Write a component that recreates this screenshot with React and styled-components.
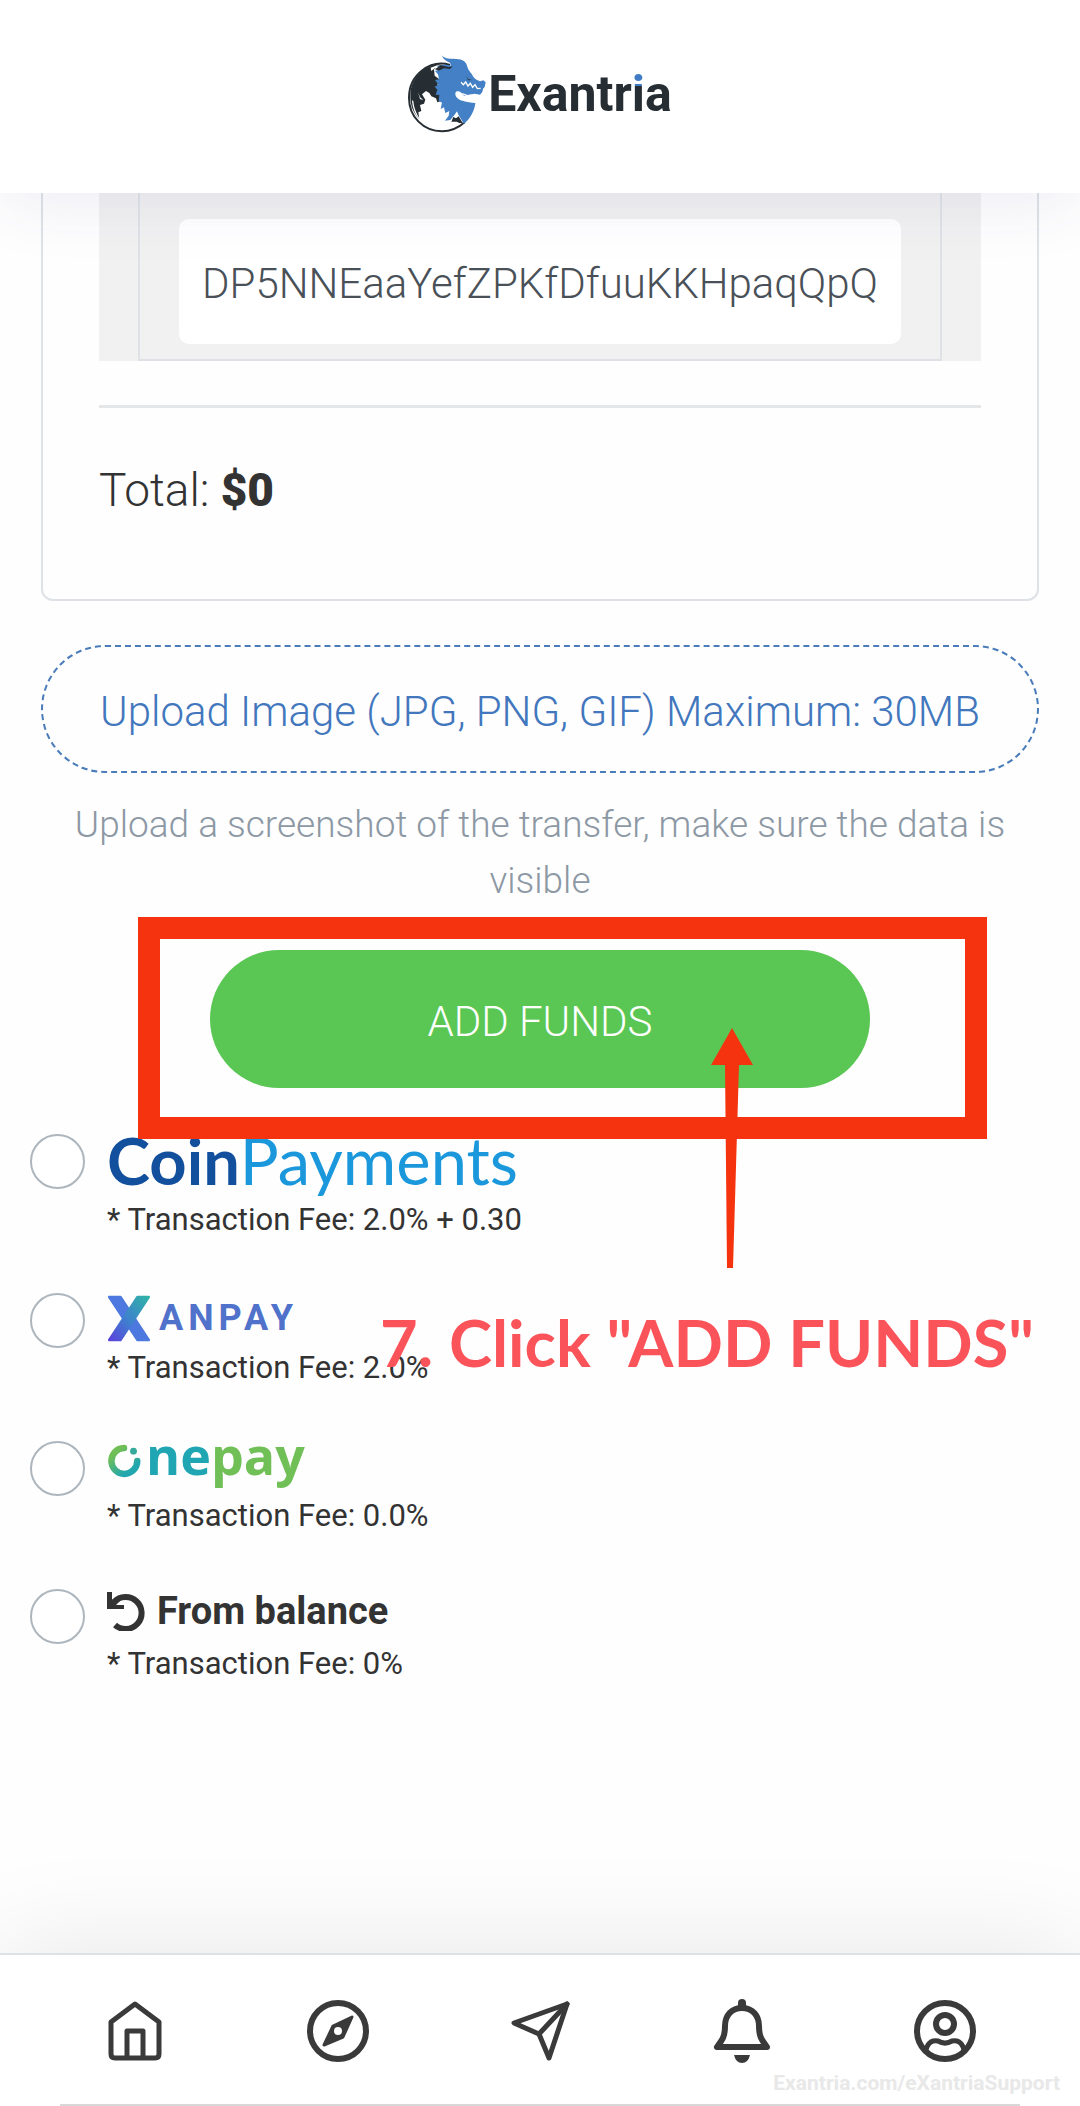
import React from "react";
import styled, { createGlobalStyle } from "styled-components";

const ink = "#333333";
const line = "#dee2e6";
const red = "#f5330f";

const GlobalStyle = createGlobalStyle`
  *, *::before, *::after { box-sizing: border-box; }
  body {
    margin: 0;
    background: #fefefe;
    color: ${ink};
    font-family: Roboto, "Liberation Sans", sans-serif;
  }
`;

const Page = styled.div`
  display: flex;
  flex-direction: column;
  min-height: 100vh;
  overflow-x: hidden;
`;

const Header = styled.header`
  position: relative;
  z-index: 2;
  display: flex;
  align-items: center;
  justify-content: center;
  height: 193px;
  padding-bottom: 6px;
  background: #fff;
  box-shadow: 0 4px 70px rgba(60, 60, 150, 0.1);
`;

const Logo = styled.a`
  display: flex;
  align-items: center;
  gap: 2px;
  color: #272e33;
  text-decoration: none;
  font-size: 50px;
  font-weight: 700;
  line-height: 60px;
`;

const TwoToneLetter = styled.span`
  background: linear-gradient(#3f7cc4 36%, #272e33 36%);
  background-clip: text;
  color: transparent;
`;

const Main = styled.main`
  display: flex;
  flex-direction: column;
`;

const Form = styled.form`
  display: flex;
  flex-direction: column;
  padding: 0 41px;
`;

const Card = styled.section`
  padding: 0 56px 79px;
  border: 2px solid ${line};
  border-top: 0;
  border-radius: 0 0 12px 12px;
`;

const Shade = styled.div`
  padding: 0 39px;
  background: #f1f1f1;
`;

const AddressCell = styled.div`
  padding: 26px 39px 15px;
  border: 2px solid ${line};
  border-top: 0;
`;

const AddressInput = styled.input`
  display: block;
  width: 100%;
  height: 125px;
  padding: 4px 20px 0;
  border: 0;
  border-radius: 10px;
  background: #fff;
  color: #495057;
  font: 300 42px Roboto, "Liberation Sans", sans-serif;
  text-align: center;
`;

const Rule = styled.hr`
  height: 3px;
  margin: 44px 0 52px;
  border: 0;
  background: #e5e6e7;
`;

const Total = styled.p`
  margin: 0;
  font-size: 46px;
  font-weight: 300;
  line-height: 60px;

  strong { font-weight: 900; }
`;

const Upload = styled.label`
  display: flex;
  align-items: center;
  justify-content: center;
  height: 128px;
  margin-top: 44px;
  padding-top: 4px;
  border: 2px dashed #4a7cba;
  border-radius: 64px;
  color: #4277bd;
  font-size: 42px;
  font-weight: 300;
  cursor: pointer;
`;

const HiddenFile = styled.input`
  position: absolute;
  width: 1px;
  height: 1px;
  opacity: 0;
`;

const Hint = styled.p`
  margin: 24px 0 41px;
  color: #8c98a4;
  font-size: 37px;
  font-weight: 300;
  line-height: 56px;
  text-align: center;
`;

const SubmitArea = styled.div`
  position: relative;
  z-index: 1;
  align-self: center;
  width: 660px;
`;

const SubmitButton = styled.button`
  display: block;
  width: 100%;
  height: 138px;
  padding: 4px 0 0;
  border: 0;
  border-radius: 69px;
  background: #5ac754;
  color: #fff;
  font: 300 42px Roboto, "Liberation Sans", sans-serif;
  cursor: pointer;
`;

const Highlight = styled.div`
  position: absolute;
  inset: -33px -117px -51px -72px;
  border: 22px solid ${red};
  pointer-events: none;
`;

const Arrow = styled.svg`
  position: absolute;
  top: 78px;
  left: 501px;
  width: 42px;
  height: 240px;
  pointer-events: none;
`;

const StepLabel = styled.div`
  position: absolute;
  top: 352px;
  left: 170px;
  color: #fa545a;
  font-family: Lato, "Liberation Sans", sans-serif;
  font-size: 65px;
  font-weight: 700;
  line-height: 80px;
  white-space: nowrap;
  pointer-events: none;
`;

const Methods = styled.ul`
  display: flex;
  flex-direction: column;
  gap: 52px;
  margin: 46px 0 0;
  padding: 0 30px;
  list-style: none;
`;

const Method = styled.label`
  display: flex;
  align-items: flex-start;
  gap: 22px;
  cursor: pointer;
`;

const Radio = styled.input`
  appearance: none;
  flex: none;
  width: 55px;
  height: 55px;
  margin: 0;
  border: 2px solid #adb5bd;
  border-radius: 50%;
  background: #fff;

  &:checked { border: 16px solid #4277bd; }
`;

const MethodName = styled.div`
  display: flex;
  align-items: flex-start;
  height: ${(p) => (p.$tall ? 63 : 52)}px;
`;

const Fee = styled.div`
  font-size: 31px;
  line-height: 46px;
  height: 44px;
`;

const CoinMark = styled.span`
  color: #1b98dc;
  font-family: Lato, "Liberation Sans", sans-serif;
  font-size: 65px;
  line-height: 52px;

  b { color: #124f9c; }
`;

const XanMark = styled.span`
  display: flex;
  align-items: center;
  gap: 8px;
  height: 50px;
  color: #5072ca;
  font-size: 36px;
  font-weight: 700;
  letter-spacing: 5px;
`;

const OneMark = styled.span`
  display: flex;
  align-items: flex-start;
  gap: 5px;
  color: #70bf57;
  font-family: "Open Sans", "Noto Sans", sans-serif;
  font-size: 52px;
  font-weight: 700;
  line-height: 28px;

  em { color: #20a5b3; font-style: normal; }
  svg { margin-top: 3px; }
`;

const BalanceMark = styled.span`
  display: flex;
  align-items: center;
  gap: 11px;
  font-size: 38px;
  font-weight: 700;
  line-height: 44px;
`;

const BottomNav = styled.nav`
  position: relative;
  display: flex;
  align-items: center;
  justify-content: space-around;
  height: 153px;
  margin-top: auto;
  padding: 0 34px;
  border-top: 2px solid ${line};
  background: #fff;
  box-shadow: 0 0 110px rgba(0, 0, 0, 0.1);

  &::after {
    content: "";
    position: absolute;
    right: 60px;
    bottom: 0;
    left: 60px;
    height: 2px;
    background: #d8d8d8;
  }
`;

const NavLink = styled.a`
  display: flex;
  color: #3a3a3a;
`;

const Watermark = styled.span`
  position: absolute;
  right: 20px;
  bottom: 11px;
  color: #e8e8e8;
  font-size: 21px;
  font-weight: 700;
  line-height: 24px;
`;

function DragonIcon() {
  return (
    <svg width="78" height="78" viewBox="24 12 234 234" aria-hidden="true">
      <path d="M150 42C90 24 27 72 27 140C27 198 70 240 126 241C155 241 176 230 194 214" fill="none" stroke="#272e33" strokeWidth="6" />
      <path d="M112 40C68 48 34 82 31 128C30 160 38 184 58 204L55 184L64 180L60 162L72 158L76 146L66 130L78 120L88 126L94 136L108 142L112 154L124 150L126 120L112 102L120 86L104 74L102 54L140 44Z" fill="#272e33" />
      <path d="M36 148C38 176 48 198 66 212C50 192 42 172 40 150Z" fill="#fff" />
      <path d="M92 50L112 43L140 47L120 52L112 56L104 52L94 60Z" fill="#fff" />
      <path d="M54 124L60 138L70 148L60 144Z" fill="#fff" />
      <path d="M154 212L160 198L168 202L176 196L188 216L178 216L170 212Z" fill="#272e33" />
      <path d="M125 13C137 26 151 23 166 24C187 23 199 32 202 47C204 56 211 63 216 70C221 83 231 88 240 91L250 88L257 94L254 108L249 113L247 123L240 131L224 128L192 134L184 125C170 115 163 124 167 134C173 150 202 153 226 156C224 178 211 203 192 219L176 193L171 181L165 190L151 207L135 209L146 194L148 180L136 186L132 169L122 174L126 155L116 149L118 132L107 131L112 116L104 107L115 101L105 87L117 85L114 70L105 60L117 57L112 46C123 42 139 39 153 44L150 35C139 31 130 25 125 13Z" fill="#4380c5" />
      <path d="M105 55L122 43L146 48L158 46L150 54L132 52L116 59Z" fill="#272e33" />
      <path d="M198 73L204 84L216 87L204 88Z" fill="#272e33" />
      <path d="M183 94L190 101L197 93L204 105L211 97L218 109L225 101L232 113L242 112" fill="none" stroke="#fff" strokeWidth="4" />
      <path d="M187 128L202 134L226 132" fill="none" stroke="#fff" strokeWidth="4" />
    </svg>
  );
}

function XanIcon() {
  return (
    <svg width="44" height="47" viewBox="20 43 132 143" aria-hidden="true">
      <defs>
        <linearGradient id="xan-bar" x1="1" y1="0" x2="0" y2="1">
          <stop offset="0" stopColor="#2fb3a6" />
          <stop offset="0.55" stopColor="#3f7fcf" />
          <stop offset="1" stopColor="#5a43dc" />
        </linearGradient>
      </defs>
      <path d="M26 49H60L146 180H112Z" fill="#4c78df" stroke="#4c78df" strokeWidth="8" strokeLinejoin="round" />
      <path d="M112 49H146L60 180H26Z" fill="url(#xan-bar)" stroke="url(#xan-bar)" strokeWidth="8" strokeLinejoin="round" />
    </svg>
  );
}

function OneIcon() {
  return (
    <svg width="34" height="34" viewBox="20 26 100 100" aria-hidden="true">
      <defs>
        <linearGradient id="one-ring" x1="0" y1="0" x2="0.8" y2="1">
          <stop offset="0.2" stopColor="#6fbf56" />
          <stop offset="0.85" stopColor="#22a7ae" />
        </linearGradient>
      </defs>
      <path d="M70 38A38 38 0 1 0 109 76" fill="none" stroke="url(#one-ring)" strokeWidth="19" strokeLinecap="round" />
      <circle cx="98" cy="47" r="10" fill="#35aa9b" />
    </svg>
  );
}

function UndoIcon() {
  return (
    <svg width="39" height="39" viewBox="0 0 39 39" aria-hidden="true">
      <path d="M8 33A16 16 0 1 0 7 10" fill="none" stroke={ink} strokeWidth="6" />
      <path d="M0 0H5V8L9 5L13 9L9 13H17V17H0Z" fill={ink} />
    </svg>
  );
}

const lineProps = { fill: "none", stroke: "currentColor", strokeLinecap: "round", strokeLinejoin: "round" };

const HomeIcon = () => (
  <svg width="62" height="62" viewBox="-4 0 62 62" aria-hidden="true" {...lineProps} strokeWidth="5">
    <path d="M27 4L51 22V54Q51 58 47 58H7Q3 58 3 54V22Z" />
    <path d="M19 57V31H35V57" />
  </svg>
);

const CompassIcon = () => (
  <svg width="62" height="62" viewBox="0 0 62 62" aria-hidden="true" {...lineProps}>
    <circle cx="31" cy="31" r="28" strokeWidth="6" />
    <path d="M45 17L36 37L17 45L26 26Z" fill="currentColor" strokeWidth="3" />
    <circle cx="31" cy="31" r="4" fill="#fff" stroke="none" />
  </svg>
);

const SendIcon = () => (
  <svg width="62" height="62" viewBox="-4 0 62 62" aria-hidden="true" {...lineProps} strokeWidth="5">
    <path d="M54 4L1 23L26 34L36 58Z" />
    <path d="M26 34L54 4" />
  </svg>
);

const BellIcon = () => (
  <svg width="62" height="64" viewBox="-3 0 62 64" aria-hidden="true" {...lineProps} strokeWidth="6">
    <path d="M28 9C18 9 11 16 11 27C11 37 9 40 3 48H53C47 40 45 37 45 27C45 16 38 9 28 9Z" />
    <path d="M28 4V8" strokeWidth="8" />
    <path d="M20 56H36Q34 64 28 64T20 56Z" fill="currentColor" stroke="none" />
  </svg>
);

const UserIcon = () => (
  <svg width="62" height="62" viewBox="0 0 62 62" aria-hidden="true" {...lineProps}>
    <circle cx="31" cy="31" r="28" strokeWidth="6" />
    <circle cx="31" cy="24" r="9" strokeWidth="6" />
    <path d="M12 50C14 41 20 40 24 41C29 44 33 44 38 41C42 40 48 41 50 50" strokeWidth="5" />
  </svg>
);

const methods = [
  { id: "coinpayments", tall: true, fee: "2.0% + 0.30", name: <CoinMark><b>Coin</b>Payments</CoinMark> },
  { id: "xanpay", fee: "2.0%", name: <XanMark><XanIcon />ANPAY</XanMark> },
  { id: "onepay", fee: "0.0%", name: <OneMark><OneIcon /><span><em>ne</em>pay</span></OneMark> },
  { id: "balance", fee: "0%", name: <BalanceMark><UndoIcon />From balance</BalanceMark> },
];

const links = [
  { label: "Home", Icon: HomeIcon },
  { label: "Explore", Icon: CompassIcon },
  { label: "Send", Icon: SendIcon },
  { label: "Notifications", Icon: BellIcon },
  { label: "Account", Icon: UserIcon },
];

export default function App() {
  return (
    <Page>
      <GlobalStyle />
      <Header>
        <Logo href="#">
          <DragonIcon />
          <span>Exantr<TwoToneLetter>i</TwoToneLetter>a</span>
        </Logo>
      </Header>
      <Main>
        <Form onSubmit={(e) => e.preventDefault()}>
          <Card>
            <Shade>
              <AddressCell>
                <AddressInput aria-label="Wallet address" readOnly value="DP5NNEaaYefZPKfDfuuKKHpaqQpQ" />
              </AddressCell>
            </Shade>
            <Rule />
            <Total>Total: <strong>$0</strong></Total>
          </Card>
          <Upload>
            <HiddenFile type="file" accept="image/*" />
            Upload Image (JPG, PNG, GIF) Maximum: 30MB
          </Upload>
          <Hint>Upload a screenshot of the transfer, make sure the data is visible</Hint>
          <SubmitArea>
            <SubmitButton type="submit">ADD FUNDS</SubmitButton>
            <Highlight />
            <Arrow viewBox="0 0 42 240" aria-hidden="true">
              <path d="M21 0L42 37H28L22 240H16L14 37H0Z" fill={red} />
            </Arrow>
            <StepLabel>7. Click "ADD FUNDS"</StepLabel>
          </SubmitArea>
        </Form>
        <Methods>
          {methods.map((m) => (
            <li key={m.id}>
              <Method>
                <Radio type="radio" name="method" value={m.id} />
                <div>
                  <MethodName $tall={m.tall}>{m.name}</MethodName>
                  <Fee>* Transaction Fee: {m.fee}</Fee>
                </div>
              </Method>
            </li>
          ))}
        </Methods>
      </Main>
      <BottomNav>
        {links.map(({ label, Icon }) => (
          <NavLink key={label} href="#" aria-label={label}><Icon /></NavLink>
        ))}
        <Watermark>Exantria.com/eXantriaSupport</Watermark>
      </BottomNav>
    </Page>
  );
}
